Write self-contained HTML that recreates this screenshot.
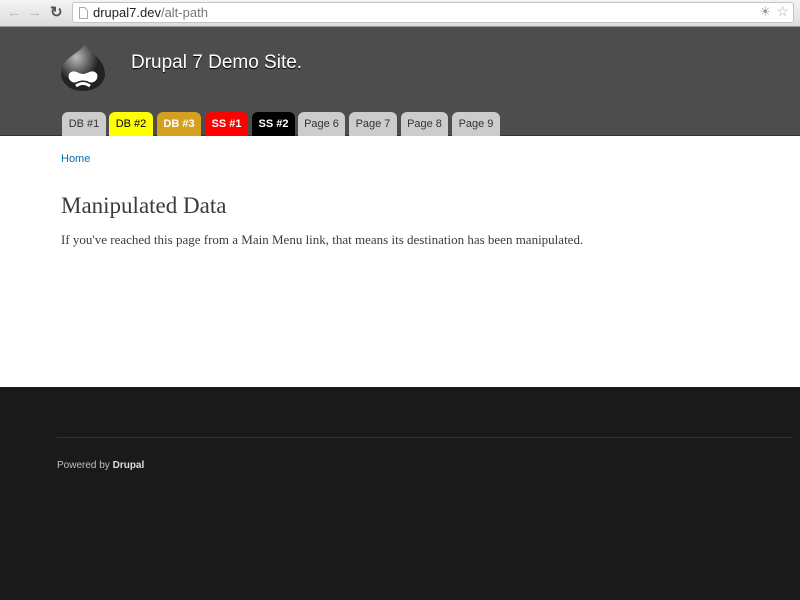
<!DOCTYPE html>
<html><head><style>
*{margin:0;padding:0;box-sizing:border-box}
body{width:800px;height:600px;overflow:hidden;background:#fff;font-family:"Liberation Sans",sans-serif;position:relative}
.chrome{position:absolute;left:0;top:0;width:800px;height:27px;background:linear-gradient(#f4f4f4,#dcdcdc);border-bottom:1px solid #999}
.url{position:absolute;left:72px;top:2px;width:722px;height:21px;background:#fff;border:1px solid #c4c4c4;border-radius:3px;font-size:13px;line-height:19px;padding-left:20px;color:#222}
.url span{color:#777}
.hdr{position:absolute;left:0;top:27px;width:800px;height:109px;background:#4d4d4d;border-bottom:1px solid #333}
.title{position:absolute;left:131px;top:25px;color:#fff;font-size:19px;text-shadow:0 1px 1px #000}
.tab{position:absolute;top:112px;height:24px;border-radius:6px 6px 0 0;font-size:11px;text-align:center;line-height:24px;color:#333;background:#ccc}
.crumb{position:absolute;left:61px;top:153px;font-size:11px;color:#0071b3}
h1{position:absolute;left:61px;top:193px;font-family:"Liberation Serif",serif;font-weight:normal;font-size:23px;color:#3b3b3b}
p{position:absolute;left:61px;top:232px;font-family:"Liberation Serif",serif;font-size:13px;color:#3b3b3b}
.foot{position:absolute;left:0;top:387px;width:800px;height:213px;background:#1a1a1a}
.line{position:absolute;left:57px;top:50px;width:735px;height:1px;background:#333}
.pw{position:absolute;left:57px;top:73px;font-size:10px;color:#c0c0c0}
.pw b{color:#ddd}
</style></head><body>
<div class="chrome">
<span style="position:absolute;left:7px;top:4px;color:#bbb;font-size:15px">&#8592;</span>
<span style="position:absolute;left:27px;top:4px;color:#bbb;font-size:15px">&#8594;</span>
<span style="position:absolute;left:50px;top:3px;color:#555;font-size:15px;font-weight:bold">&#8635;</span>
<div class="url"><svg style="position:absolute;left:6px;top:4px" width="9" height="12"><path d="M.5 .5h5l3 3v8H.5z" fill="#fff" stroke="#aaa"/></svg>drupal7.dev<span>/alt-path</span>
<span style="position:absolute;right:22px;top:-1px;color:#999;font-size:13px">&#9728;</span>
<span style="position:absolute;right:4px;top:-1px;color:#aaa;font-size:14px">&#9734;</span></div>
</div>
<div class="hdr">
<svg style="position:absolute;left:59px;top:15px" width="48" height="50" viewBox="0 0 48 50">
<defs><radialGradient id="g" cx=".35" cy=".3"><stop offset="0" stop-color="#bbb"/><stop offset="1" stop-color="#222"/></radialGradient></defs>
<path d="M26 1C28 10 46 16 46 32C46 42 36 49 24 49C12 49 2 42 2 31C2 15 22 12 26 1Z" fill="url(#g)"/>
<path d="M10 32c4-6 10 0 14 0s10-6 14 0c2 6-4 10-8 8-3-2-9-2-12 0-4 2-10-2-8-8z" fill="#fff"/>
<path d="M17 44q7-5 14 0" stroke="#fff" stroke-width="3" fill="none"/>
</svg>
<div class="title">Drupal 7 Demo Site.</div>
</div>
<div class="tab" style="left:62px;width:44px">DB #1</div>
<div class="tab" style="left:109px;width:44px;background:#ff0;color:#000">DB #2</div>
<div class="tab" style="left:157px;width:44px;background:#d4a020;color:#fff;font-weight:bold">DB #3</div>
<div class="tab" style="left:205px;width:43px;background:#f00;color:#fff;font-weight:bold">SS #1</div>
<div class="tab" style="left:252px;width:43px;background:#000;color:#fff;font-weight:bold">SS #2</div>
<div class="tab" style="left:298px;width:47px">Page 6</div>
<div class="tab" style="left:349px;width:48px">Page 7</div>
<div class="tab" style="left:401px;width:47px">Page 8</div>
<div class="tab" style="left:452px;width:48px">Page 9</div>
<div class="crumb">Home</div>
<h1>Manipulated Data</h1>
<p>If you've reached this page from a Main Menu link, that means its destination has been manipulated.</p>
<div class="foot"><div class="line"></div><div class="pw">Powered by <b>Drupal</b></div></div>
</body></html>
